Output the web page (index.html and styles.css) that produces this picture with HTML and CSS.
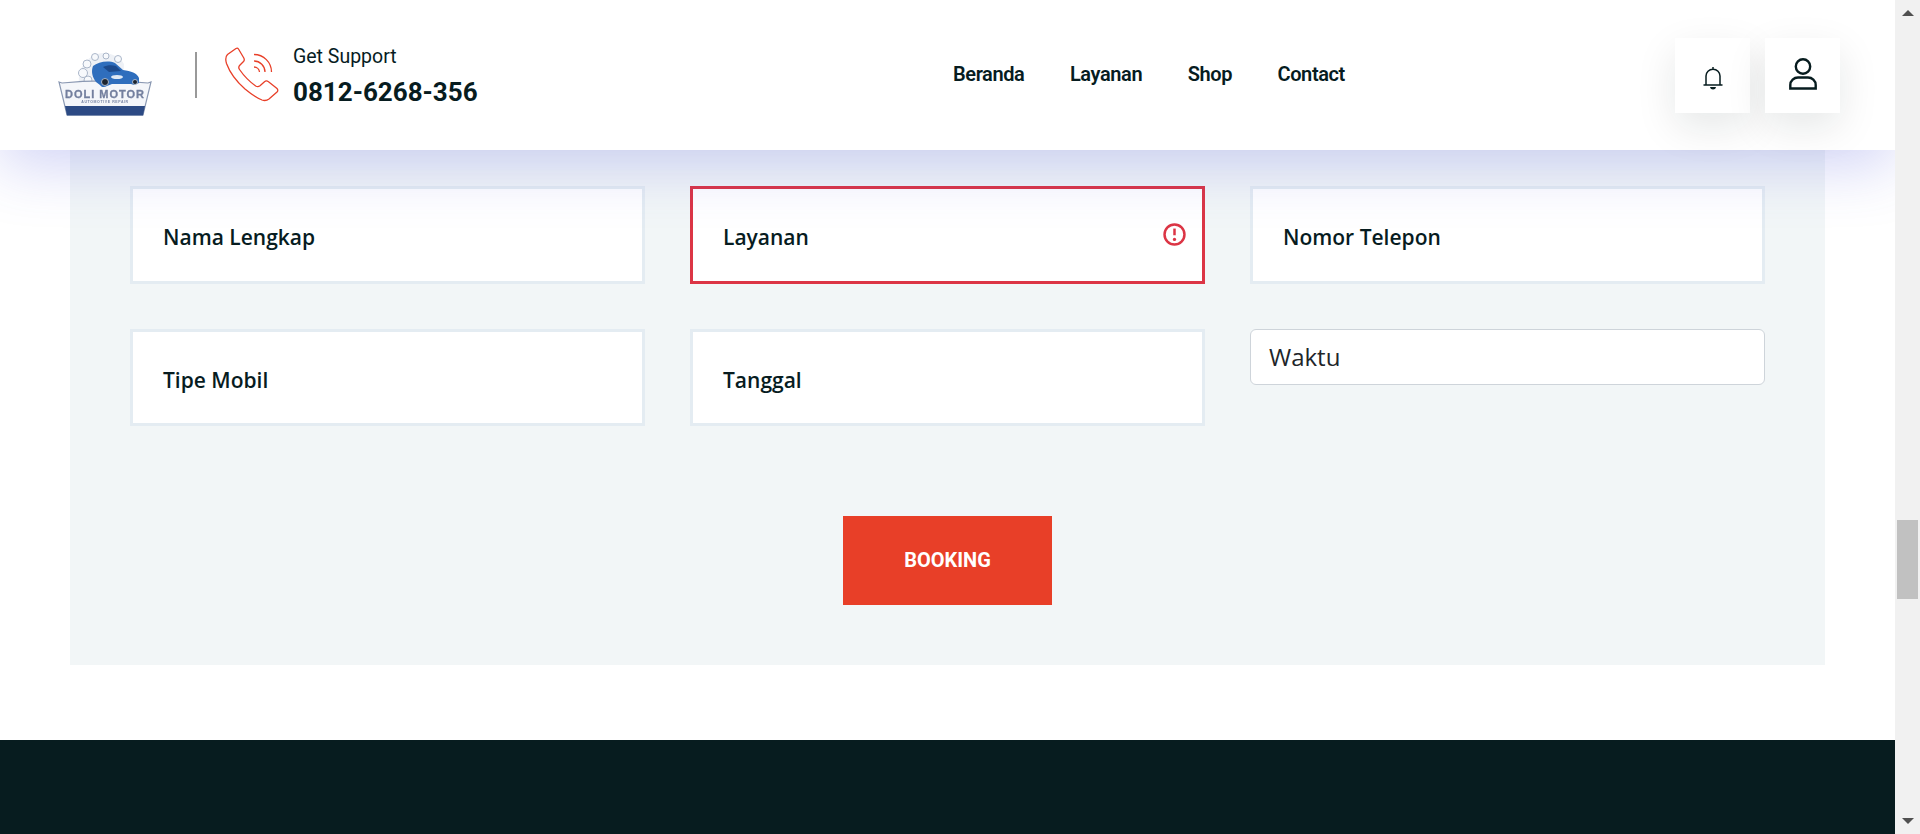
FILE: index.html
```html
<!DOCTYPE html>
<html lang="id">
<head>
<meta charset="utf-8">
<title>Booking</title>
<link rel="stylesheet" href="styles.css">
</head>
<body>
<div class="viewport">
  <div class="page">
    <header class="header">
      <svg class="logo" viewBox="0 0 94 64" aria-label="Doli Motor">
        <g class="logo-art">
          <path class="logo-foam" d="M21 32C19 16 30 2 45 1c9 0 17 4 21 11l-1 20z"/>
          <g class="logo-bubbles">
            <circle cx="29" cy="12" r="4"/>
            <circle cx="25" cy="21" r="4.500"/>
            <circle cx="30" cy="28" r="4"/>
            <circle cx="37" cy="5" r="3.500"/>
            <circle cx="48" cy="4" r="3"/>
            <circle cx="60" cy="7" r="3.500"/>
          </g>
          <path class="logo-sign" d="M1 30l3 1c28-3 56-3 86 0l3-1-8 33H9z"/>
          <path class="logo-strip" d="M7 54h80l-2 9.500H9z"/>
          <path class="logo-car" d="M35 14c5-4 15-6 22-3l8 7c8 1 14 3 16 8v5l-5 2-3-1H54l-5 2c-3 2-6 1-7-1l-4-3c-4-5-5-11-3-16z"/>
          <path class="logo-window" d="M45 15c4-2 9-2 13-1l5 5-12 1z"/>
          <ellipse class="logo-lamp" cx="59" cy="25" rx="6" ry="2"/>
          <circle class="logo-wheel" cx="47" cy="30" r="3.500"/>
          <circle class="logo-wheel" cx="77" cy="30" r="2.500"/>
          <text class="logo-name" x="47" y="45.500" text-anchor="middle">DOLI MOTOR</text>
          <text class="logo-sub" x="47" y="51" text-anchor="middle">AUTOMOTIVE REPAIR</text>
        </g>
      </svg>
      <span class="divider"></span>
      <svg class="phone-icon" viewBox="0 0 54 54" aria-hidden="true">
        <path d="M11 1.500 2.500 7.500C.5 9.500.3 12.500 1.500 16.500 5 26 12 35 20 42c6 5 12 9 17 11 3 1 5 .5 7-1l8-7c1.200-1.300 1-2.700-.3-3.800l-8.200-6.500c-1.500-1-2.800-1-4 0l-4.500 4c-1.500 1.200-2.800 1.300-4.300.3C25 35 19 29 14.500 22.500c-1-1.500-.9-3 .3-4.200l3.700-3.800c1-1.100 1-2.200.3-3.500L13.500 2c-.7-1-1.600-1.100-2.500-.5z"/>
        <path d="M29 7.500A17.500 17.500 0 0 1 46.500 25"/>
        <path d="M29 14A11 11 0 0 1 40 25"/>
        <path d="M29 20A5.500 5.500 0 0 1 34.500 25"/>
      </svg>
      <div class="support">
        <span class="support-label">Get Support</span>
        <span class="support-number">0812-6268-356</span>
      </div>
      <nav class="nav">
        <a class="nav-link">Beranda</a>
        <a class="nav-link">Layanan</a>
        <a class="nav-link">Shop</a>
        <a class="nav-link">Contact</a>
      </nav>
      <div class="actions">
        <button class="action" aria-label="Notifikasi">
          <svg class="bell" viewBox="0 0 20 24">
            <path class="bell-line" d="M3 18.500V10c0-3.800 3-6.700 7-6.700s7 2.900 7 6.700v8.500M.5 19h19M10 3V1"/>
            <path class="bell-fill" d="M7 21h6c-.5 1.800-1.500 2.500-3 2.500S7.500 22.800 7 21z"/>
          </svg>
        </button>
        <button class="action" aria-label="Akun">
          <svg class="user" viewBox="0 0 28 32">
            <circle cx="14" cy="8.500" r="7.200"/>
            <path d="M1.300 30.500v-3.500c0-4.500 3.700-7.500 7.700-7.500h10c4 0 7.700 3 7.700 7.500v3.500z"/>
          </svg>
        </button>
      </div>
    </header>

    <section class="section">
      <div class="card">
        <div class="grid">
          <div class="field">Nama Lengkap</div>
          <div class="field field-invalid">Layanan
            <svg class="error-icon" viewBox="0 0 12 12" aria-hidden="true">
              <circle cx="6" cy="6" r="5.200"/>
              <path d="M6 2.900v3.500"/>
              <circle class="error-dot" cx="6" cy="8.600" r=".85"/>
            </svg>
          </div>
          <div class="field">Nomor Telepon</div>
          <div class="field">Tipe Mobil</div>
          <div class="field">Tanggal</div>
          <div class="control">Waktu</div>
        </div>
        <div class="submit">
          <button class="booking">BOOKING</button>
        </div>
      </div>
    </section>

    <footer class="footer"></footer>
  </div>

  <div class="scrollbar">
    <span class="arrow arrow-up"></span>
    <div class="scroll-track"><span class="thumb"></span></div>
    <span class="arrow arrow-down"></span>
  </div>
</div>
</body>
</html>
```

FILE: styles.css
```css
* { box-sizing: border-box; }

html, body {
  margin: 0;
  height: 100%;
  overflow: hidden;
  background: #fff;
}

.viewport {
  display: flex;
  height: 834px;
}

.page {
  flex: 1;
  display: flex;
  flex-direction: column;
  min-width: 0;
  overflow: hidden;
}

/* Header */
.header {
  position: relative;
  z-index: 2;
  height: 150px;
  flex: none;
  display: flex;
  align-items: center;
  padding: 0 55px 0 58px;
  background: #fff;
  box-shadow: 0 15px 60px rgba(70, 80, 220, 0.25);
  font-family: Roboto, "Liberation Sans", sans-serif;
  color: #071c1f;
}

.logo {
  width: 94px;
  height: 64px;
  flex: none;
  margin-top: 17px;
  overflow: visible;
}

.logo-art { filter: blur(0.7px); }
.logo-foam { fill: #eef1f6; }
.logo-bubbles { fill: #f7f9fc; stroke: #aab6c9; stroke-width: 1; }
.logo-sign { fill: #f4f6fa; stroke: #8a98b2; stroke-width: 1.200; }
.logo-strip { fill: #2c4a84; }
.logo-car { fill: #2f6ebd; }
.logo-window { fill: #1d4a8c; }
.logo-lamp { fill: #dfe8f4; }
.logo-wheel { fill: #1b2430; stroke: #c9d2e0; stroke-width: .8; }
.logo-name { font: 900 11px "Liberation Sans", sans-serif; fill: #737f9e; letter-spacing: 1px; stroke: #737f9e; stroke-width: .3; }
.logo-sub { font: 700 3.500px "Liberation Sans", sans-serif; fill: #7683a3; letter-spacing: .6px; }

.divider {
  width: 2px;
  height: 46px;
  margin-left: 43px;
  flex: none;
  background: #999;
}

.phone-icon {
  width: 54px;
  height: 54px;
  margin: -2px 0 0 28px;
  flex: none;
  fill: none;
  stroke: #e83f28;
  stroke-width: 1.300;
  overflow: visible;
}

.support {
  display: flex;
  flex-direction: column;
  margin-left: 14px;
  padding-top: 3px;
  width: 184px;
  flex: none;
}

.support-label {
  font-size: 19.500px;
  line-height: 24px;
}

.support-number {
  font-size: 26px;
  font-weight: 700;
  line-height: 32px;
  margin-top: 7px;
  white-space: nowrap;
}

.nav {
  display: flex;
  gap: 45.500px;
  margin-left: 476px;
  margin-top: -3px;
}

.nav-link {
  font-size: 20px;
  font-weight: 600;
  letter-spacing: -0.4px;
  color: #071c1f;
  white-space: nowrap;
}

.actions {
  display: flex;
  gap: 15px;
  margin-left: auto;
}

.action {
  width: 75px;
  height: 75px;
  padding: 0;
  border: 0;
  display: flex;
  align-items: center;
  justify-content: center;
  background: #fff;
  box-shadow: 0 14px 40px rgba(7, 28, 31, 0.1);
}

.bell {
  width: 20px;
  height: 24px;
  margin-top: 5px;
  overflow: visible;
}

.bell-line { fill: none; stroke: #071c1f; stroke-width: 1.500; }
.bell-fill { fill: #071c1f; }

.user {
  width: 28px;
  height: 32px;
  margin-top: -3px;
  fill: none;
  stroke: #071c1f;
  stroke-width: 2.400;
  overflow: visible;
}

/* Form card */
.section {
  flex: none;
  padding: 0 70px 75px;
}

.card {
  padding: 36px 60px 60px;
  background: #f2f6f7;
}

.grid {
  display: grid;
  grid-template-columns: repeat(3, 515px);
  grid-auto-rows: 97.500px;
  column-gap: 45px;
  row-gap: 45.400px;
  align-items: start;
}

.field {
  height: 97.500px;
  display: flex;
  align-items: center;
  justify-content: space-between;
  padding: 4px 30px 0;
  border: 3px solid #e4ecf2;
  background: #fff;
  font: 600 21px "Open Sans", sans-serif;
  color: #071c1f;
}

.field-invalid {
  border-color: #dc3545;
  padding-right: 16px;
}

.error-icon {
  width: 23px;
  height: 23px;
  flex: none;
  fill: none;
  stroke: #dc3545;
  stroke-width: 1.300;
  margin-bottom: 4px;
}

.error-dot {
  fill: #dc3545;
  stroke: none;
}

.control {
  height: 56px;
  display: flex;
  align-items: center;
  padding: 0 18px;
  border: 1px solid #ced4da;
  border-radius: 6px;
  background: #fff;
  font: 400 24px "Open Sans", sans-serif;
  color: #212529;
}

.submit {
  display: flex;
  justify-content: center;
  margin-top: 89.600px;
}

.booking {
  width: 209px;
  height: 89px;
  padding: 0;
  border: 0;
  background: #e83f28;
  color: #fff;
  font: 700 20px Roboto, "Liberation Sans", sans-serif;
}

.footer {
  flex: 1;
  background: #071c1f;
}

/* Window scrollbar */
.scrollbar {
  width: 25px;
  flex: none;
  display: flex;
  flex-direction: column;
  align-items: center;
  background: #f1f1f1;
}

.scroll-track {
  flex: 1;
  width: 100%;
  padding: 0 2px;
}

.thumb {
  display: block;
  height: 79px;
  margin-top: 504px;
  background: #c1c1c1;
}

.arrow {
  width: 0;
  height: 0;
  flex: none;
  border-left: 6px solid transparent;
  border-right: 6px solid transparent;
}

.arrow-up {
  margin-top: 10px;
  border-bottom: 6px solid #505050;
}

.arrow-down {
  margin-bottom: 10px;
  border-top: 6px solid #505050;
}
```
